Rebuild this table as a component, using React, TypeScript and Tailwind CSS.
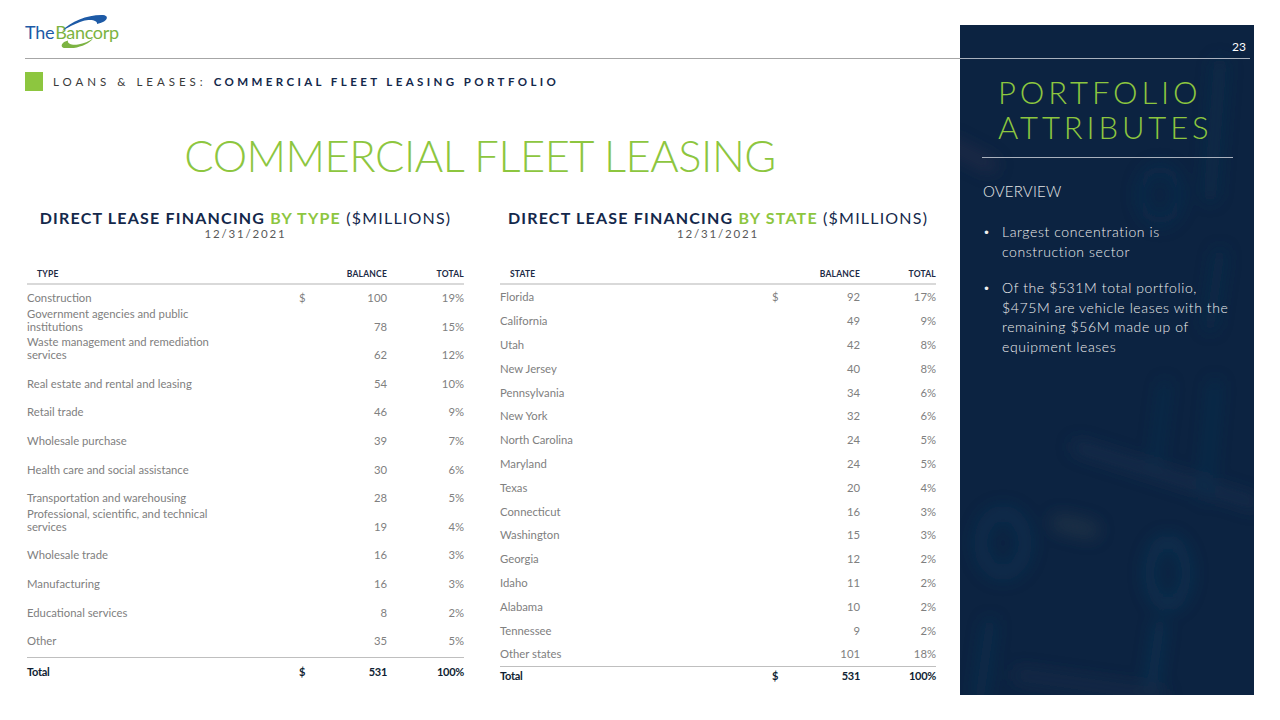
import React from "react";

type Row = { label: string[]; dollar?: boolean; bal: string; tot: string };

const typeRows: Row[] = [
  { label: ["Construction"], dollar: true, bal: "100", tot: "19%" },
  { label: ["Government agencies and public", "institutions"], bal: "78", tot: "15%" },
  { label: ["Waste management and remediation", "services"], bal: "62", tot: "12%" },
  { label: ["Real estate and rental and leasing"], bal: "54", tot: "10%" },
  { label: ["Retail trade"], bal: "46", tot: "9%" },
  { label: ["Wholesale purchase"], bal: "39", tot: "7%" },
  { label: ["Health care and social assistance"], bal: "30", tot: "6%" },
  { label: ["Transportation and warehousing"], bal: "28", tot: "5%" },
  { label: ["Professional, scientific, and technical", "services"], bal: "19", tot: "4%" },
  { label: ["Wholesale trade"], bal: "16", tot: "3%" },
  { label: ["Manufacturing"], bal: "16", tot: "3%" },
  { label: ["Educational services"], bal: "8", tot: "2%" },
  { label: ["Other"], bal: "35", tot: "5%" },
];

const stateRows: Row[] = [
  { label: ["Florida"], dollar: true, bal: "92", tot: "17%" },
  { label: ["California"], bal: "49", tot: "9%" },
  { label: ["Utah"], bal: "42", tot: "8%" },
  { label: ["New Jersey"], bal: "40", tot: "8%" },
  { label: ["Pennsylvania"], bal: "34", tot: "6%" },
  { label: ["New York"], bal: "32", tot: "6%" },
  { label: ["North Carolina"], bal: "24", tot: "5%" },
  { label: ["Maryland"], bal: "24", tot: "5%" },
  { label: ["Texas"], bal: "20", tot: "4%" },
  { label: ["Connecticut"], bal: "16", tot: "3%" },
  { label: ["Washington"], bal: "15", tot: "3%" },
  { label: ["Georgia"], bal: "12", tot: "2%" },
  { label: ["Idaho"], bal: "11", tot: "2%" },
  { label: ["Alabama"], bal: "10", tot: "2%" },
  { label: ["Tennessee"], bal: "9", tot: "2%" },
  { label: ["Other states"], bal: "101", tot: "18%" },
];

function Logo() {
  return (
    <div className="relative h-[36px] w-[100px]">
      <div className="absolute left-0 top-[11px] flex items-baseline text-[18px] leading-[18px] tracking-[-0.3px]">
        <span className="text-[#1d5aa6]">The</span>
        <span className="ml-[1px] text-[#7cb342]">Bancorp</span>
      </div>
      <svg className="absolute left-0 top-0" width="100" height="36" viewBox="25 12 100 36">
        <path d="M62 31 C71 21, 88 14.5, 103 15 C108 15.5, 108 19, 104 21.5 C102 22.5, 99 23.5, 97 24 C98 20.5, 91 18.5, 83 21 C75 23.5, 67 28, 62 31 Z" fill="#1d5aa6" />
        <path d="M93 38.5 C89 44, 79 48, 69 48.5 C62 49, 60 46, 63 43 C64.5 41.5, 66 41, 68 40.5 C67 44, 72 45.5, 78 44.5 C84 43.5, 89 41.5, 93 38.5 Z" fill="#7cb342" />
      </svg>
    </div>
  );
}

function Table({
  rows,
  head,
  rowH,
  width,
  totalW,
  twoLine,
}: {
  rows: Row[];
  head: string;
  rowH: string;
  width: string;
  totalW: string;
  twoLine: boolean;
}) {
  return (
    <div className={width}>
      <div className="flex h-[22px] items-end pb-[4px] border-b-2 border-[#d9d9d9] text-[8.5px] leading-[10px] font-bold text-[#1b2a45] tracking-[0.2px]">
        <div className="w-[272px] pl-[10px]">{head}</div>
        <div className="w-[20px]" />
        <div className="w-[68px] text-right">BALANCE</div>
        <div className={`${totalW} text-right`}>TOTAL</div>
      </div>
      <div>
        {rows.map((r, i) => (
          <div
            key={i}
            className={`flex ${rowH} ${twoLine ? "items-end pb-[9.5px]" : "items-center"} text-[11.3px] leading-[13px] text-[#808080]`}
          >
            <div className="w-[272px] whitespace-nowrap">
              {r.label.map((l, j) => (
                <div key={j}>{l}</div>
              ))}
            </div>
            <div className="w-[20px]">{r.dollar ? "$" : ""}</div>
            <div className="w-[68px] text-right">{r.bal}</div>
            <div className={`${totalW} text-right`}>{r.tot}</div>
          </div>
        ))}
      </div>
      <div
        className={`flex ${twoLine ? "h-[28px]" : "h-[19px]"} items-center border-t border-[#bfbfbf] text-[11px] leading-[13px] font-bold text-[#0f1e33] tracking-[-0.3px]`}
      >
        <div className="w-[272px]">Total</div>
        <div className="w-[20px]">$</div>
        <div className="w-[68px] text-right">531</div>
        <div className={`${totalW} text-right`}>100%</div>
      </div>
    </div>
  );
}

function SectionTitle({ green }: { green: string }) {
  return (
    <div className="text-center">
      <div className="text-[16px] leading-[18px] tracking-[1.2px] text-[#14284b] whitespace-nowrap">
        <span className="font-bold">DIRECT LEASE FINANCING </span>
        <span className="font-bold text-[#8dc63f]">{green}</span>
        <span> ($MILLIONS)</span>
      </div>
      <div className="text-[11.5px] leading-[14px] tracking-[1.8px] text-[#595959]">12/31/2021</div>
    </div>
  );
}

function PanelBg() {
  return (
    <svg className="absolute inset-0" width="294" height="670" viewBox="0 0 294 670">
      <defs>
        <filter id="blur" x="-50%" y="-50%" width="200%" height="200%">
          <feGaussianBlur stdDeviation="8" />
        </filter>
      </defs>
      <g filter="url(#blur)" fill="none" strokeLinecap="round" opacity="0.55">
        <ellipse cx="43" cy="518" rx="22" ry="30" stroke="#0f3654" strokeWidth="14" />
        <ellipse cx="208" cy="548" rx="18" ry="32" stroke="#0f3a5a" strokeWidth="12" />
        <path d="M118 422 L294 478" stroke="#1c3150" strokeWidth="14" />
        <path d="M100 498 L130 505" stroke="#2a3a48" strokeWidth="18" />
        <path d="M255 360 L245 470" stroke="#0e3552" strokeWidth="10" />
        <path d="M205 360 L195 440" stroke="#0e3552" strokeWidth="8" />
        <path d="M30 600 L20 670" stroke="#0e3552" strokeWidth="12" />
        <path d="M200 600 L190 670" stroke="#0e3a5a" strokeWidth="12" />
        <path d="M60 650 L200 670" stroke="#1c2e48" strokeWidth="14" />
        <path d="M260 40 L250 170" stroke="#10304e" strokeWidth="14" />
        <ellipse cx="200" cy="170" rx="18" ry="26" stroke="#0f3252" strokeWidth="10" />
        <path d="M260 230 L250 300" stroke="#10304e" strokeWidth="12" />
        <path d="M-10 120 L30 140" stroke="#2a2f48" strokeWidth="16" />
      </g>
    </svg>
  );
}

export default function App() {
  return (
    <div
      className="w-[1280px] h-[720px] bg-white overflow-hidden flex"
      style={{ fontFamily: "Lato, 'Open Sans', 'Liberation Sans', sans-serif" }}
    >
      <div className="w-[960px] flex flex-col">
        <div className="h-[58px] pl-[25px] pt-[12px]">
          <Logo />
        </div>
        <div className="ml-[25px] h-px bg-[#a6a6a6]" />
        <div className="ml-[25px] mt-[12px] flex items-center h-[20px]">
          <div className="w-[18px] h-[19px] bg-[#8dc63f]" />
          <div className="ml-[10px] text-[11.5px] leading-[13px] whitespace-nowrap">
            <span className="tracking-[4px] text-[#3a3a3a]">LOANS &amp; LEASES: </span>
            <span className="tracking-[3.4px] font-bold text-[#14284b]">COMMERCIAL FLEET LEASING PORTFOLIO</span>
          </div>
        </div>
        <div className="mt-[40px] text-center text-[43.5px] leading-[48px] font-light text-[#8dc63f] tracking-[-0.5px] whitespace-nowrap">
          COMMERCIAL FLEET LEASING
        </div>
        <div className="mt-[30px] flex">
          <div className="ml-[27px] w-[437px] flex flex-col">
            <SectionTitle green="BY TYPE" />
            <div className="mt-[22px]">
              <Table rows={typeRows} head="TYPE" rowH="h-[28.6px]" width="w-[437px]" totalW="w-[77px]" twoLine />
            </div>
          </div>
          <div className="ml-[36px] w-[436px] flex flex-col">
            <SectionTitle green="BY STATE" />
            <div className="mt-[22px]">
              <Table rows={stateRows} head="STATE" rowH="h-[23.8px]" width="w-[436px]" totalW="w-[76px]" twoLine={false} />
            </div>
          </div>
        </div>
      </div>
      <div className="mt-[25px] w-[294px] h-[670px] bg-[#0c2341] relative overflow-hidden">
        <PanelBg />
        <div className="relative flex flex-col">
          <div className="mt-[15px] pr-[8px] text-right text-[12px] leading-[14px] text-white">23</div>
          <div className="mt-[4px] mr-[4px] h-px bg-[#a9b1bd]" />
          <div className="mt-[16px] pl-[38px] text-[31px] leading-[35px] font-light tracking-[3.9px] text-[#8dc63f]">
            <div>PORTFOLIO</div>
            <div>ATTRIBUTES</div>
          </div>
          <div className="mt-[12px] ml-[22px] mr-[21px] h-px bg-[#a9b1bd]" />
          <div className="mt-[25px] pl-[23px] text-[15px] leading-[16px] font-light text-[#e6e6e6] tracking-[0.2px]">OVERVIEW</div>
          <div className="mt-[23px] pl-[23px] text-[14px] leading-[19.5px] font-light text-[#eeeeee] tracking-[0.6px] flex flex-col gap-[17px]">
            <div className="flex">
              <div className="w-[19px] text-[12px]">•</div>
              <div className="whitespace-nowrap">
                <div>Largest concentration is</div>
                <div>construction sector</div>
              </div>
            </div>
            <div className="flex">
              <div className="w-[19px] text-[12px]">•</div>
              <div className="whitespace-nowrap">
                <div>Of the $531M total portfolio,</div>
                <div>$475M are vehicle leases with the</div>
                <div>remaining $56M made up of</div>
                <div>equipment leases</div>
              </div>
            </div>
          </div>
        </div>
      </div>
    </div>
  );
}
